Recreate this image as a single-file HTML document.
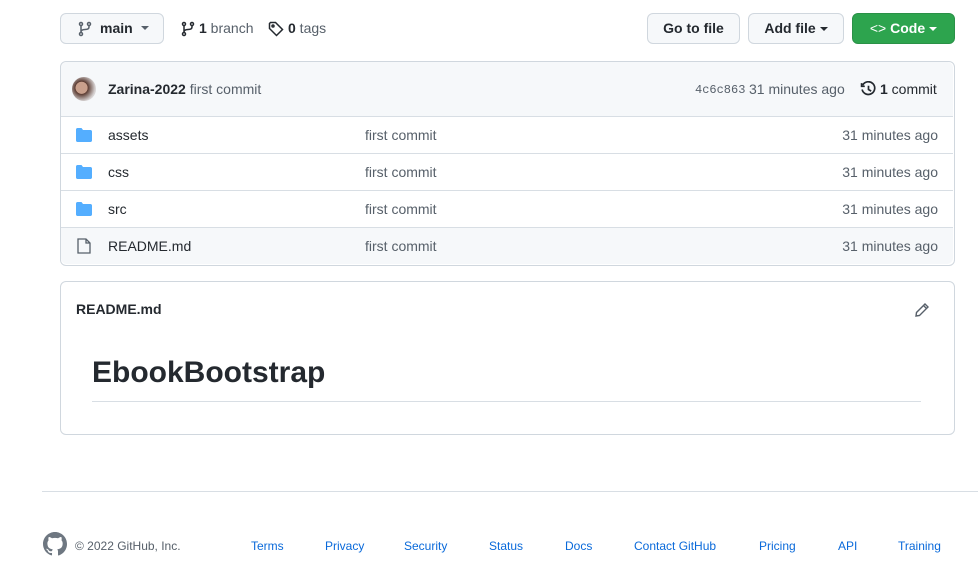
<!DOCTYPE html><html><head><style>
body{margin:0;width:978px;height:578px;background:#fff;font-family:"Liberation Sans",sans-serif;color:#24292f;font-size:14px;position:relative;overflow:hidden}
.a{position:absolute;white-space:nowrap}
.btn{position:absolute;top:13px;height:31px;border:1px solid #d0d7de;border-radius:6px;background:#f6f8fa;box-sizing:border-box;font-weight:bold;line-height:29px;font-size:14px}
.row{position:absolute;left:61px;width:892px;height:37px;border-top:1px solid #d8dee4;box-sizing:border-box}
.row span{position:absolute;top:10px}
.car{display:inline-block;border-left:4px solid transparent;border-right:4px solid transparent;border-top:4px solid currentColor;vertical-align:middle;margin-left:4px}
.f{position:absolute;top:539px;color:#0969da;font-size:12px}
</style></head><body>
<div class="btn" style="left:60px;width:104px;padding-left:16px">
<svg width="16" height="16" viewBox="0 0 16 16" style="position:absolute;left:16px;top:7px" fill="none" stroke="#57606a" stroke-width="1.5"><circle cx="4" cy="3" r="1.5"/><circle cx="4" cy="13" r="1.5"/><circle cx="12" cy="3" r="1.5"/><path d="M4 4.5v7M12 4.5v1.5c0 2-2 2.5-4 2.5s-4 .5-4 2.5"/></svg>
<span style="position:absolute;left:39px">main</span><span class="car" style="position:absolute;left:76px;top:12px;color:#57606a"></span></div>
<svg class="a" style="left:180px;top:21px" width="16" height="16" viewBox="0 0 16 16" fill="none" stroke="#24292f" stroke-width="1.5"><circle cx="4" cy="3" r="1.5"/><circle cx="4" cy="13" r="1.5"/><circle cx="12" cy="3" r="1.5"/><path d="M4 4.5v7M12 4.5v1.5c0 2-2 2.5-4 2.5s-4 .5-4 2.5"/></svg>
<div class="a" style="left:199px;top:20px;color:#57606a"><b style="color:#24292f">1</b> branch</div>
<svg class="a" style="left:268px;top:21px" width="16" height="16" viewBox="0 0 16 16" fill="none" stroke="#24292f" stroke-width="1.5"><path d="M1.5 2.5v5l7 7 6-6-7-7h-5z"/><circle cx="5" cy="5" r="1"/></svg>
<div class="a" style="left:288px;top:20px;color:#57606a"><b style="color:#24292f">0</b> tags</div>
<div class="btn" style="left:647px;width:93px;text-align:center;font-weight:bold">Go to file</div>
<div class="btn" style="left:748px;width:96px;text-align:center">Add file<span class="car"></span></div>
<div class="btn" style="left:852px;width:103px;background:#2da44e;border-color:#2a9147;color:#fff;text-align:center"><span style="font-weight:normal">&lt;&gt;</span> Code<span class="car"></span></div>
<div class="a" style="left:60px;top:61px;width:893px;height:203px;border:1px solid #d0d7de;border-radius:6px"></div>
<div class="a" style="left:61px;top:62px;width:892px;height:54px;background:#f6f8fa;border-radius:6px 6px 0 0"></div>
<div class="a" style="left:72px;top:77px;width:24px;height:24px;border-radius:50%;background:radial-gradient(circle at 40% 45%,#c9a08c 0 30%,#5a3a30 32%,#d8d4d4 70%)"></div>
<div class="a" style="left:108px;top:81px"><b>Zarina-2022</b> <span style="color:#57606a">first commit</span></div>
<div class="a" style="left:695px;top:83px;font-family:'Liberation Mono',monospace;font-size:12px;color:#57606a">4c6c863</div>
<div class="a" style="left:749px;top:81px;color:#57606a">31 minutes ago</div>
<svg class="a" style="left:860px;top:81px" width="17" height="17" viewBox="0 0 16 16" fill="none" stroke="#24292f" stroke-width="1.6"><path d="M2.5 4A6 6 0 1 1 2 8"/><path d="M1.5 2v3h3M8 4.5V8l2.5 1.5"/></svg>
<div class="a" style="left:880px;top:81px"><b>1</b> commit</div>
<div class="row" style="top:116px"><svg class="a" style="left:15px;top:11px" width="16" height="14" viewBox="0 0 16 14"><path d="M0 1.5C0 .7.7 0 1.5 0h4l1.5 2h7.5c.8 0 1.5.7 1.5 1.5v9c0 .8-.7 1.5-1.5 1.5h-13C.7 14 0 13.3 0 12.5z" fill="#54aeff"/></svg><span style="left:47px">assets</span><span style="left:304px;color:#57606a">first commit</span><span style="right:15px;color:#57606a">31 minutes ago</span></div>
<div class="row" style="top:153px"><svg class="a" style="left:15px;top:11px" width="16" height="14" viewBox="0 0 16 14"><path d="M0 1.5C0 .7.7 0 1.5 0h4l1.5 2h7.5c.8 0 1.5.7 1.5 1.5v9c0 .8-.7 1.5-1.5 1.5h-13C.7 14 0 13.3 0 12.5z" fill="#54aeff"/></svg><span style="left:47px">css</span><span style="left:304px;color:#57606a">first commit</span><span style="right:15px;color:#57606a">31 minutes ago</span></div>
<div class="row" style="top:190px"><svg class="a" style="left:15px;top:11px" width="16" height="14" viewBox="0 0 16 14"><path d="M0 1.5C0 .7.7 0 1.5 0h4l1.5 2h7.5c.8 0 1.5.7 1.5 1.5v9c0 .8-.7 1.5-1.5 1.5h-13C.7 14 0 13.3 0 12.5z" fill="#54aeff"/></svg><span style="left:47px">src</span><span style="left:304px;color:#57606a">first commit</span><span style="right:15px;color:#57606a">31 minutes ago</span></div>
<div class="row" style="top:227px;background:#f6f8fa;border-radius:0 0 6px 6px"><svg class="a" style="left:16px;top:10px" width="14" height="16" viewBox="0 0 14 16" fill="none" stroke="#57606a" stroke-width="1.3"><path d="M1 1h8l4 4v10H1z M9 1v4h4"/></svg><span style="left:47px">README.md</span><span style="left:304px;color:#57606a">first commit</span><span style="right:15px;color:#57606a">31 minutes ago</span></div>
<div class="a" style="left:60px;top:281px;width:893px;height:152px;border:1px solid #d0d7de;border-radius:6px"></div>
<div class="a" style="left:76px;top:301px;font-weight:bold">README.md</div>
<svg class="a" style="left:914px;top:302px" width="16" height="16" viewBox="0 0 16 16" fill="none" stroke="#57606a" stroke-width="1.4"><path d="M11 2l3 3-8.5 8.5L2 14l.5-3.5z M9.5 3.5l3 3"/></svg>
<div class="a" style="left:92px;top:356px;font-size:30px;font-weight:bold">EbookBootstrap</div>
<div class="a" style="left:92px;top:401px;width:829px;height:1px;background:#d8dee4"></div>
<div class="a" style="left:42px;top:491px;width:936px;height:1px;background:#d8dee4"></div>
<svg class="a" style="left:43px;top:532px" width="24" height="24" viewBox="0 0 16 16"><path fill="#6e7781" d="M8 0C3.58 0 0 3.58 0 8c0 3.54 2.29 6.530 5.47 7.59.4.07.55-.17.55-.38v-1.33c-2.23.48-2.7-1.070-2.7-1.07-.36-.93-.89-1.17-.89-1.17-.73-.5.06-.49.06-.49.8.06 1.23.83 1.23.83.71 1.23 1.87.87 2.33.66.07-.52.28-.87.51-1.07-1.78-.2-3.64-.89-3.64-3.950 0-.87.31-1.59.82-2.15-.08-.2-.36-1.02.08-2.12 0 0 .67-.21 2.2.82a7.6 7.6 0 014 0c1.53-1.04 2.2-.82 2.2-.82.44 1.1.16 1.92.08 2.12.51.56.82 1.27.82 2.15 0 3.07-1.87 3.75-3.65 3.95.29.25.54.73.54 1.48v2.2c0 .21.15.46.55.38A8.01 8.01 0 0016 8c0-4.42-3.58-8-8-8z"/></svg>
<div class="a" style="left:75px;top:539px;font-size:12px;color:#57606a">© 2022 GitHub, Inc.</div>
<div class="f" style="left:251px">Terms</div><div class="f" style="left:325px">Privacy</div><div class="f" style="left:404px">Security</div><div class="f" style="left:489px">Status</div><div class="f" style="left:565px">Docs</div><div class="f" style="left:634px">Contact GitHub</div><div class="f" style="left:759px">Pricing</div><div class="f" style="left:838px">API</div><div class="f" style="left:898px">Training</div>
</body></html>
